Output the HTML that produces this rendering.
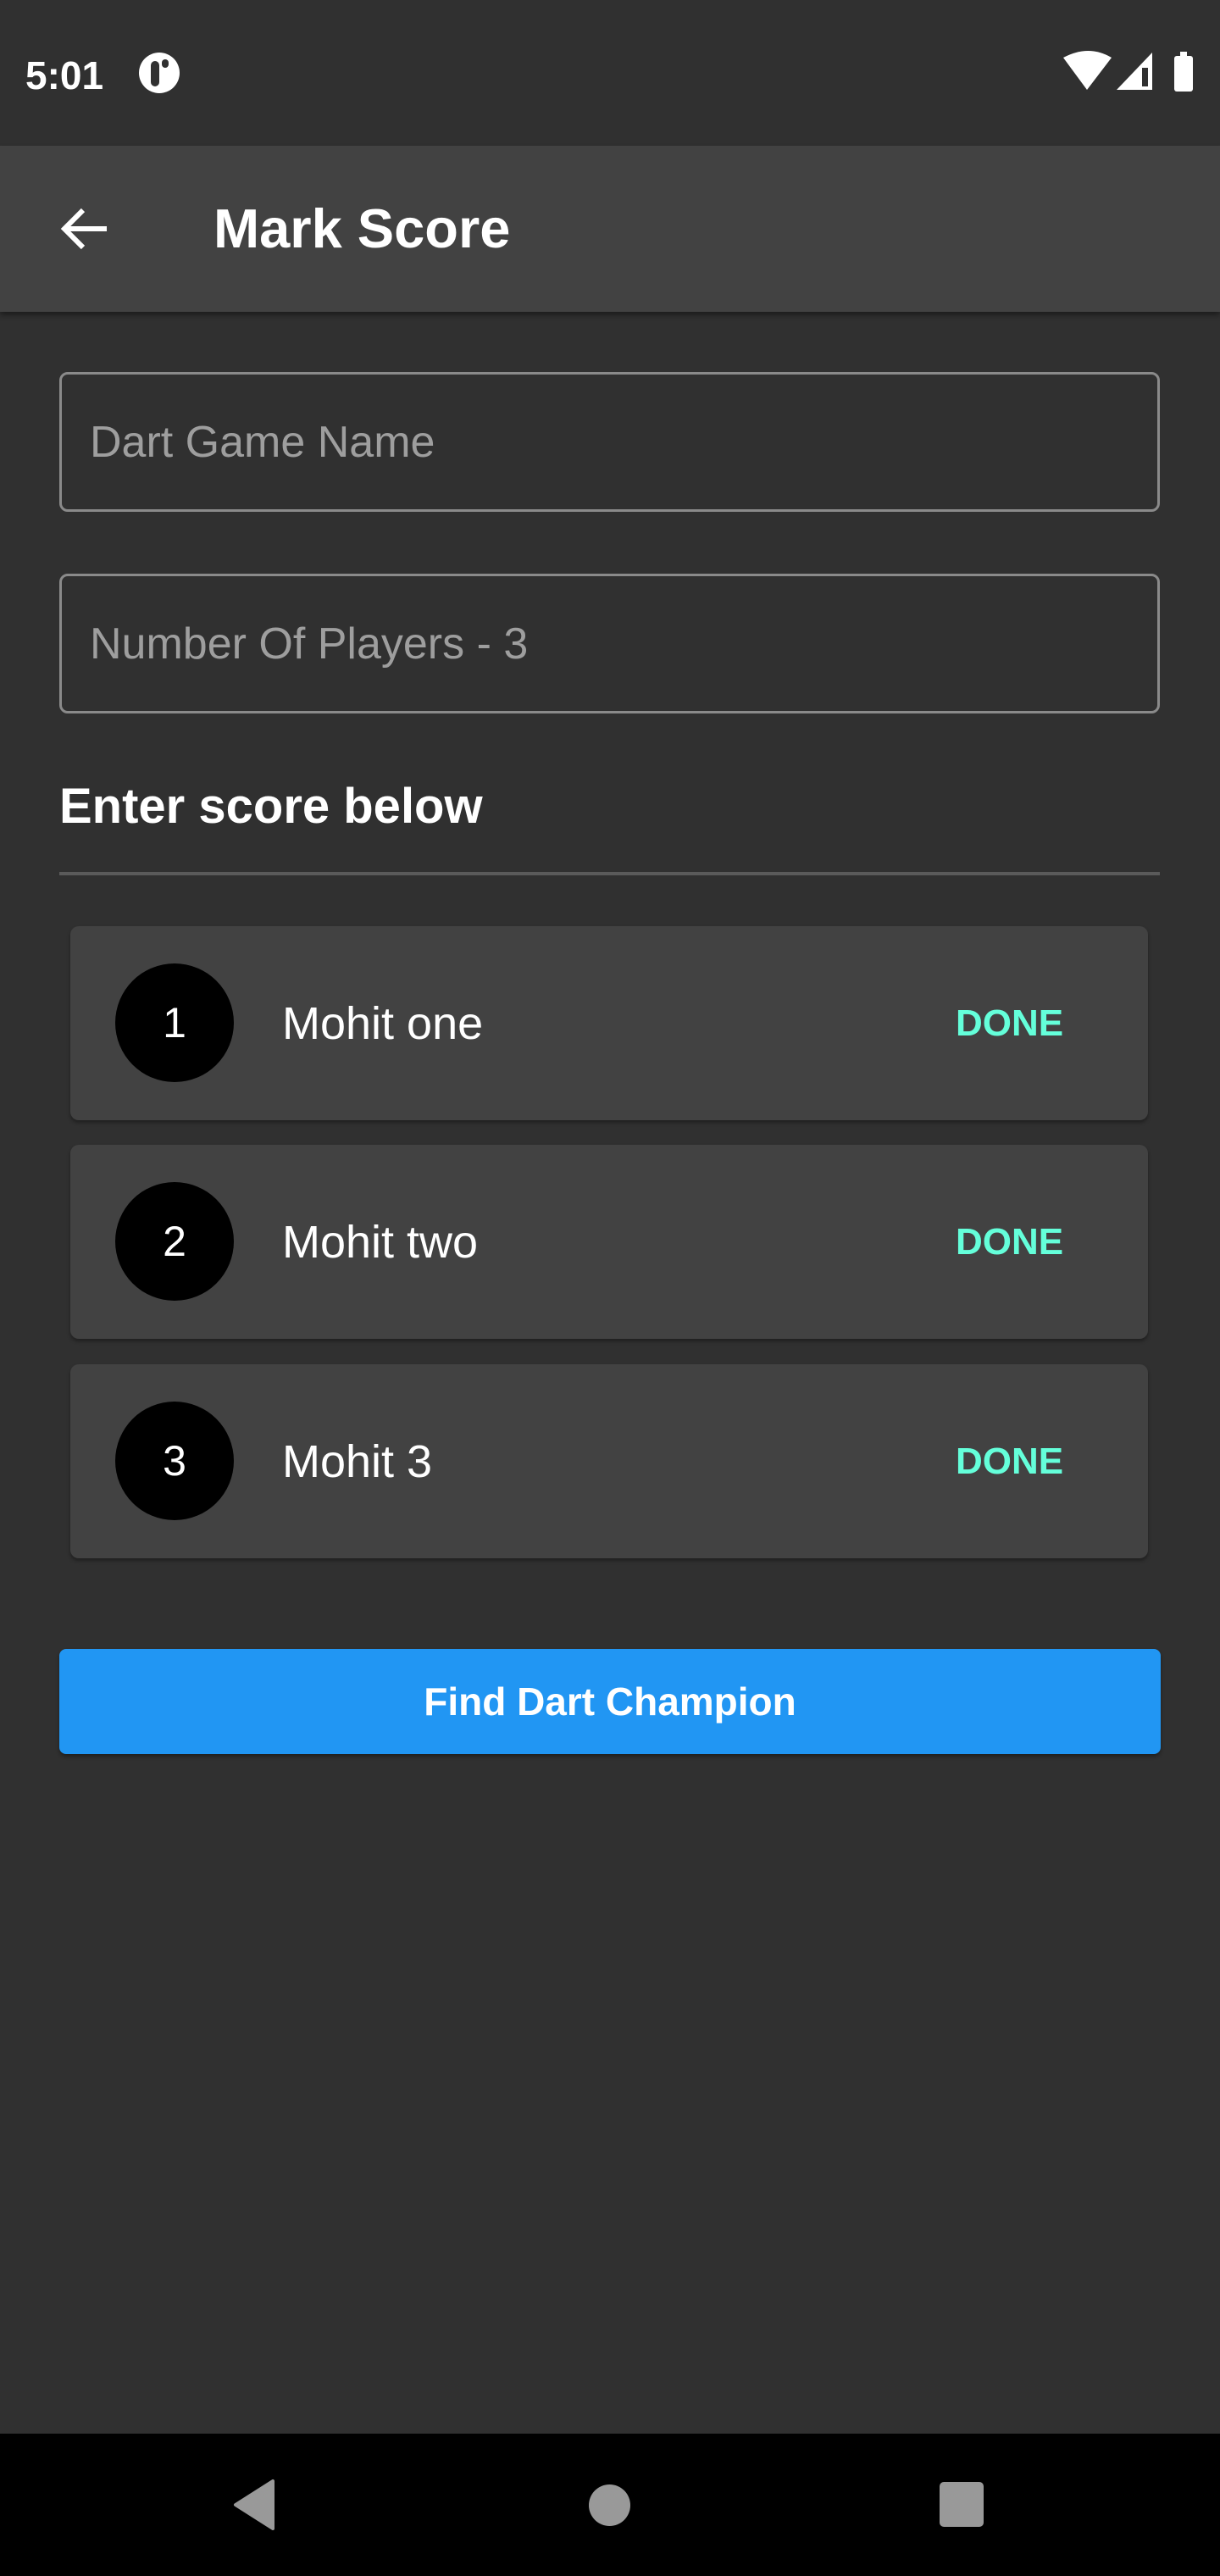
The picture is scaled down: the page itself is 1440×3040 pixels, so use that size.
<!DOCTYPE html>
<html><head><meta charset="utf-8"><style>
*{margin:0;padding:0;box-sizing:border-box}
body{width:1440px;height:3040px;background:#303030;font-family:"Liberation Sans",sans-serif;position:relative;overflow:hidden;color:#fff}
.abs{position:absolute}
.field{position:absolute;left:70px;width:1299px;height:165px;border:3px solid #8a8a8a;border-radius:10px}
.field span{position:absolute;left:33px;top:50%;transform:translateY(-50%);font-size:52px;color:#9e9e9e}
.card{position:absolute;left:83px;width:1272px;height:229px;background:#424242;border-radius:10px;box-shadow:0 3px 4px rgba(0,0,0,.35)}
.circ{position:absolute;left:53px;top:44px;width:140px;height:140px;border-radius:50%;background:#000;font-size:50px;display:flex;align-items:center;justify-content:center}
.name{position:absolute;left:250px;top:50%;transform:translateY(-50%);font-size:54px}
.done{position:absolute;left:1045px;top:50%;transform:translateY(-50%);font-size:44px;font-weight:bold;color:#64FFDA}
</style></head><body>
<div class="abs" style="left:0;top:0;width:1440px;height:172px;background:#303030"></div>
<div class="abs" style="left:30px;top:62px;font-size:46px;font-weight:bold">5:01</div>
<div class="abs" style="left:164px;top:62px;width:48px;height:48px;border-radius:50%;background:#fff"></div>
<div class="abs" style="left:178px;top:72px;width:10px;height:30px;border-radius:5px;background:#303030"></div>
<div class="abs" style="left:191px;top:70px;width:8px;height:10px;border-radius:4px;background:#303030"></div>
<svg class="abs" style="left:1250px;top:60px" width="170" height="50">
<path d="M5 8 Q35 -8 62 8 L33 46 Z" fill="#fff"/>
<path d="M110 2 L110 46 L68 46 Z" fill="#fff"/><rect x="98" y="20" width="7" height="22" fill="#303030"/>
<rect x="136" y="6" width="22" height="42" rx="3" fill="#fff"/><rect x="143" y="1" width="8" height="6" fill="#fff"/>
</svg>
<div class="abs" style="left:0;top:172px;width:1440px;height:196px;background:#424242;box-shadow:0 4px 6px rgba(0,0,0,.4)"></div>
<svg class="abs" style="left:66px;top:240px" width="64" height="64" viewBox="0 0 64 64"><path d="M60 30 H12 M32 8 L10 30 L32 52" stroke="#fff" stroke-width="6" fill="none"/></svg>
<div class="abs" style="left:252px;top:232px;font-size:65px;font-weight:bold">Mark Score</div>
<div class="field" style="top:439px"><span>Dart Game Name</span></div>
<div class="field" style="top:677px"><span>Number Of Players - 3</span></div>
<div class="abs" style="left:70px;top:918px;font-size:58px;font-weight:bold">Enter score below</div>
<div class="abs" style="left:70px;top:1029px;width:1299px;height:4px;background:#5a5a5a"></div>
<div class="card" style="top:1093px"><div class="circ">1</div><div class="name">Mohit one</div><div class="done">DONE</div></div>
<div class="card" style="top:1351px"><div class="circ">2</div><div class="name">Mohit two</div><div class="done">DONE</div></div>
<div class="card" style="top:1610px"><div class="circ">3</div><div class="name">Mohit 3</div><div class="done">DONE</div></div>
<div class="abs" style="left:70px;top:1946px;width:1300px;height:124px;background:#2196F3;border-radius:8px;box-shadow:0 3px 4px rgba(0,0,0,.35);display:flex;align-items:center;justify-content:center;font-size:46px;font-weight:bold">Find Dart Champion</div>
<div class="abs" style="left:0;top:2872px;width:1440px;height:168px;background:#000"></div>
<svg class="abs" style="left:270px;top:2924px" width="60" height="64"><path d="M52 4 L52 60 L8 32 Z" fill="#999" stroke="#999" stroke-width="4" stroke-linejoin="round"/></svg>
<div class="abs" style="left:695px;top:2932px;width:49px;height:49px;border-radius:50%;background:#999"></div>
<div class="abs" style="left:1109px;top:2929px;width:52px;height:53px;border-radius:5px;background:#999"></div>
</body></html>
